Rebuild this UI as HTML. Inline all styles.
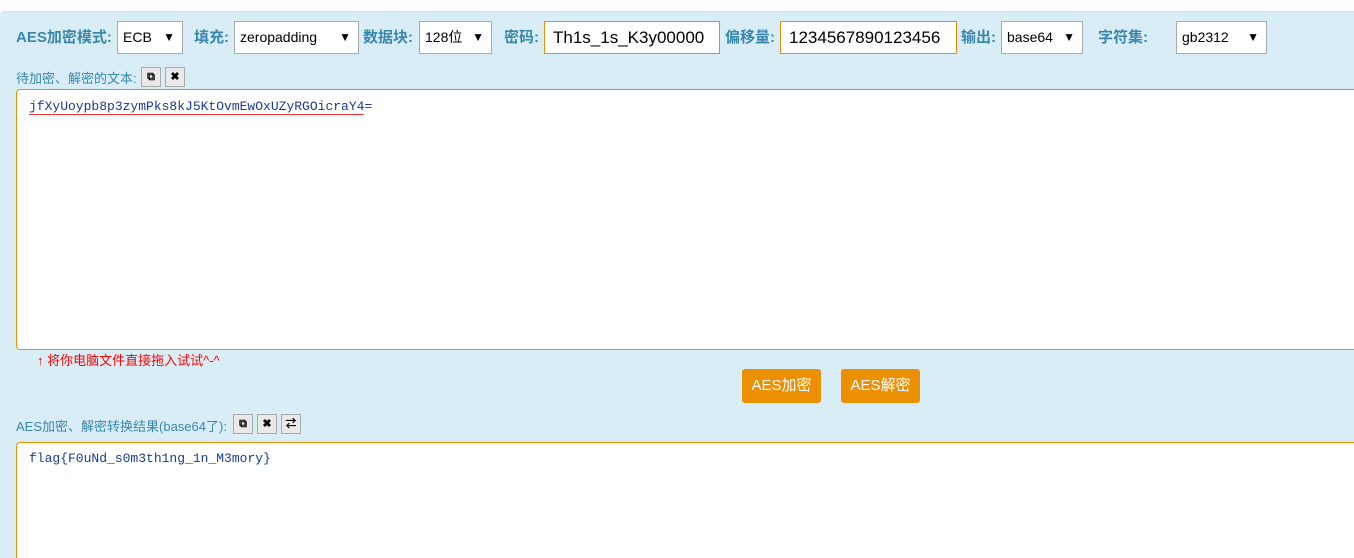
<!DOCTYPE html>
<html><head><meta charset="utf-8"><style>
html,body{margin:0;width:1354px;height:558px;overflow:hidden}
body{background:#fff;font-family:"Liberation Sans","Noto Sans CJK SC",sans-serif;position:relative}
.panel{position:absolute;left:0;top:11px;width:1370px;height:547px;background:#d9edf7;border-top:1px solid #bce8f1;border-radius:4px 0 0 0}
.a{position:absolute}
.lb{position:absolute;color:#3a87ad;font-weight:bold;font-size:15px;top:28px;line-height:20px}
.sel{position:absolute;top:21px;height:33px;background:#fff;border:1px solid #aaa;box-sizing:border-box;font-size:14px;line-height:31px;padding-left:5px;color:#000}
.sel i{position:absolute;right:7px;top:0;font-style:normal;font-size:12px}
.inp{position:absolute;top:21px;height:33px;background:#fff;border:1px solid #e98f00;box-sizing:border-box;font-size:17px;line-height:31px;padding-left:8px;color:#000}
.sm{position:absolute;color:#3a87ad;font-size:13px}
.ib{position:absolute;width:18px;height:18px;border:1px solid #aaa;background:#e9e9e9;font-size:11px;text-align:center;line-height:18px;font-weight:bold}
.ta{position:absolute;left:16px;width:1360px;background:#fff;border:1px solid #e98f00;border-radius:4px;box-sizing:border-box}
.mono{position:absolute;left:12px;font-family:"Liberation Mono",monospace;font-size:13px;color:#1a3b8f}
.btn{position:absolute;top:369px;width:79px;height:34px;background:#ec8f00;border-radius:3px;color:#fff;font-size:15px;text-align:center;line-height:34px}
</style></head><body>
<div class="panel"></div>
<div class="lb" style="left:16px">AES加密模式:</div>
<div class="sel" style="left:117px;width:66px">ECB<i>▼</i></div>
<div class="lb" style="left:194px">填充:</div>
<div class="sel" style="left:234px;width:125px">zeropadding<i>▼</i></div>
<div class="lb" style="left:363px">数据块:</div>
<div class="sel" style="left:419px;width:73px">128位<i>▼</i></div>
<div class="lb" style="left:504px">密码:</div>
<div class="inp" style="left:544px;width:176px;overflow:hidden;white-space:nowrap">Th1s_1s_K3y00000</div>
<div class="lb" style="left:725px">偏移量:</div>
<div class="inp" style="left:780px;width:177px">1234567890123456</div>
<div class="lb" style="left:961px">输出:</div>
<div class="sel" style="left:1001px;width:82px">base64<i>▼</i></div>
<div class="lb" style="left:1098px">字符集:</div>
<div class="sel" style="left:1176px;width:91px">gb2312<i>▼</i></div>
<div class="sm" style="left:16px;top:68px">待加密、解密的文本:</div>
<div class="ib" style="left:141px;top:67px">⧉</div>
<div class="ib" style="left:165px;top:67px">✖</div>
<div class="ta" style="top:89px;height:261px"><div class="mono" style="top:9px"><span style="border-bottom:1px solid #e33">jfXyUoypb8p3zymPks8kJ5KtOvmEwOxUZyRGOicraY4</span>=</div></div>
<div class="a" style="left:37px;top:350px;color:#f00;font-size:13px">↑ 将你电脑文件直接拖入试试^-^</div>
<div class="btn" style="left:742px">AES加密</div>
<div class="btn" style="left:841px">AES解密</div>
<div class="sm" style="left:16px;top:416px">AES加密、解密转换结果(base64了):</div>
<div class="ib" style="left:233px;top:414px">⧉</div>
<div class="ib" style="left:257px;top:414px">✖</div>
<div class="ib" style="left:281px;top:414px">⇄</div>
<div class="ta" style="top:442px;height:140px"><div class="mono" style="top:8px">flag{F0uNd_s0m3th1ng_1n_M3mory}</div></div>
</body></html>
